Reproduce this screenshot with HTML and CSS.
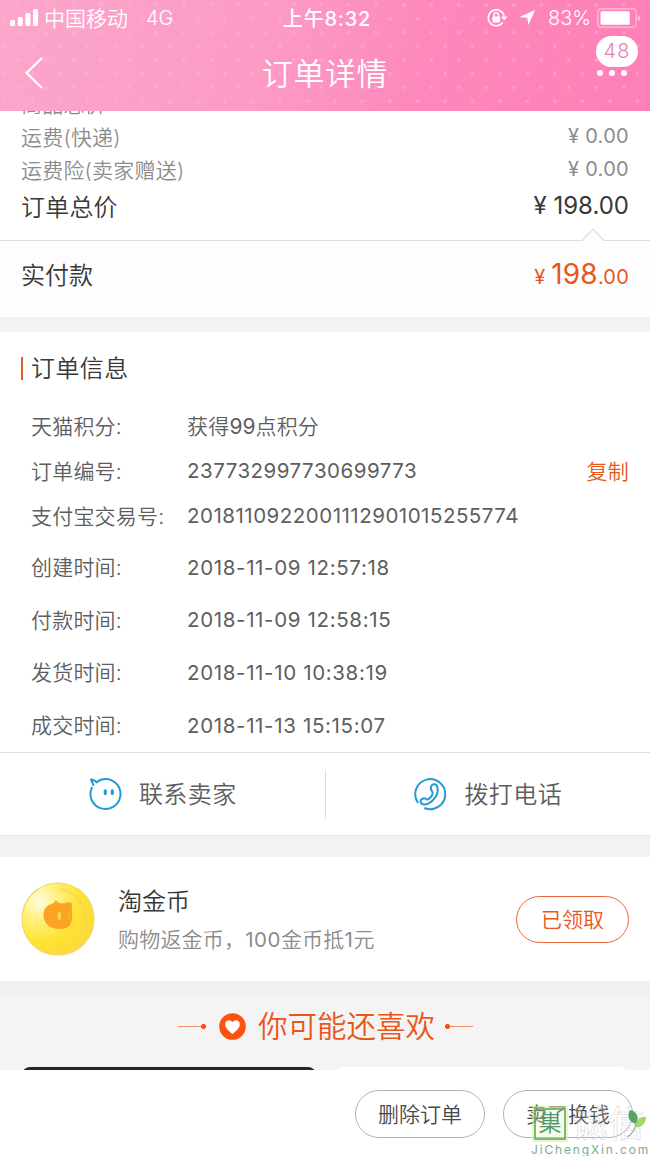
FILE: index.html
```html
<!DOCTYPE html>
<html lang="zh-CN">
<head>
    <meta charset="UTF-8">
    <meta name="viewport" content="width=device-width, initial-scale=1.0">
    <title>订单详情</title>
    <link rel="stylesheet" href="styles.css">
</head>
<body>
    <div class="page">
        <!-- Header -->
        <header class="header">
            <div class="status-bar">
                <div class="status-left">
                    <svg class="signal" width="29" height="18" viewBox="0 0 29 18" fill="#fff">
                        <rect x="0" y="11" width="5" height="6" rx="1.5"/>
                        <rect x="7.8" y="8" width="5" height="9" rx="1.5"/>
                        <rect x="15.4" y="4" width="5" height="13" rx="1.5"/>
                        <rect x="23" y="0" width="5" height="17" rx="1.5"/>
                    </svg>
                    <span class="carrier">中国移动</span>
                    <span class="network">4G</span>
                </div>
                <div class="clock">上午8:32</div>
                <div class="status-right">
                    <svg class="lock" width="21" height="20" viewBox="0 0 21 20" fill="none" stroke="#fff" stroke-width="1.5">
                        <path d="M15.8 14.5A8 8 0 1 1 17.2 8.5"/>
                        <path d="M14 8.5h6.6l-3.3 4z" fill="#fff" stroke="none"/>
                        <rect x="5.5" y="8.5" width="7.4" height="6" rx="0.8" fill="#fff" stroke="none"/>
                        <path d="M7 9V7a2.2 2.2 0 0 1 4.4 0v2"/>
                    </svg>
                    <svg class="location" width="17" height="17" viewBox="0 0 17 17" fill="#fff">
                        <path d="M16 1L9.3 16.3 8.5 8.7 0.6 8.1z"/>
                    </svg>
                    <span class="percent">83%</span>
                    <svg class="battery" width="44" height="20" viewBox="0 0 44 20">
                        <rect x="0.8" y="0.8" width="38.4" height="18.4" rx="3.5" fill="none" stroke="#fff" stroke-opacity="0.5" stroke-width="1.2"/>
                        <rect x="3.5" y="3.2" width="29.2" height="13.6" rx="1.5" fill="#fff"/>
                        <path d="M41.4 7v6c2.3-1 2.3-5 0-6z" fill="#fff" fill-opacity="0.5"/>
                    </svg>
                </div>
            </div>
            <div class="nav">
                <svg class="back" width="20" height="32" viewBox="0 0 20 32" fill="none" stroke="#fff" stroke-width="2.2">
                    <path d="M18 1L2.5 16 18 31"/>
                </svg>
                <h1>订单详情</h1>
                <div class="more"><i></i><i></i><i></i><span class="badge">48</span></div>
            </div>
        </header>

        <!-- Price summary -->
        <section class="prices">
            <div class="price-row"><span>商品总价</span></div>
            <div class="price-row"><span>运费(快递)</span><b>¥ 0.00</b></div>
            <div class="price-row"><span>运费险(卖家赠送)</span><b>¥ 0.00</b></div>
            <div class="price-row total"><span>订单总价</span><b>¥ 198.00</b></div>
        </section>
        <section class="paid">
            <svg class="notch" width="24" height="14" viewBox="0 0 24 14">
                <path d="M0.5 13L12 1.2 23.5 13V14H0.5z" fill="#fdfdfd"/>
                <path d="M0.5 13L12 1.2 23.5 13" fill="none" stroke="#dedede" stroke-width="1.2"/>
            </svg>
            <span>实付款</span>
            <div class="amount">¥ <em>198</em>.00</div>
        </section>

        <!-- Order info -->
        <section class="info">
            <h2>订单信息</h2>
            <dl>
                <div class="info-row"><dt>天猫积分:</dt><dd>获得<span class="points">99</span>点积分</dd></div>
                <div class="info-row"><dt>订单编号:</dt><dd class="num">237732997730699773</dd><a class="copy">复制</a></div>
                <div class="info-row"><dt>支付宝交易号:</dt><dd class="num">2018110922001112901015255774</dd></div>
            </dl>
            <dl class="times">
                <div class="info-row"><dt>创建时间:</dt><dd class="num">2018-11-09 12:57:18</dd></div>
                <div class="info-row"><dt>付款时间:</dt><dd class="num">2018-11-09 12:58:15</dd></div>
                <div class="info-row"><dt>发货时间:</dt><dd class="num">2018-11-10 10:38:19</dd></div>
                <div class="info-row"><dt>成交时间:</dt><dd class="num">2018-11-13 15:15:07</dd></div>
            </dl>
        </section>

        <section class="contact">
            <div class="contact-item">
                <svg width="34" height="34" viewBox="0 0 34 34" fill="none" stroke="#2499d6" stroke-width="2" stroke-linecap="round" stroke-linejoin="round">
                    <path d="M8.6 5.2C12 2.3 15 2 17.5 2A15 15 0 1 1 3.8 10.8"/>
                    <path d="M8.6 5.2C7.5 4.5 6.3 2.5 3 2.5L5.4 8"/>
                    <path d="M17.3 13.8v2.6M24.3 13.8v2.6" stroke-width="3.2"/>
                </svg>
                <span>联系卖家</span>
            </div>
            <div class="contact-item">
                <svg width="34" height="34" viewBox="0 0 34 34" fill="none" stroke="#2499d6" stroke-width="2" stroke-linecap="round" stroke-linejoin="round">
                    <path d="M4.6 25.2A15 15 0 1 1 12 31.2"/>
                    <path d="M18.2 9.2c1.5-2.8 5.2-2.5 6.2 1 1.5 6.3-3 13.5-9.3 16.5-3.5 1.7-7.4.6-7.6-2-.2-2.7 3.7-4.3 5.6-2.7 1.3 1.2 2.7.2 4-1.2 1.7-1.9 2.9-4.2 2.4-5.4-.5-1.3-2.7-3.5-1.3-6.2z"/>
                </svg>
                <span>拨打电话</span>
            </div>
        </section>

        <!-- Coins -->
        <section class="coins">
            <svg class="coin" width="74" height="74" viewBox="0 0 74 74">
                <defs>
                    <radialGradient id="gold" cx="0.24" cy="0.25" r="0.8">
                        <stop offset="0" stop-color="#fffce0"/>
                        <stop offset="0.35" stop-color="#fff07a"/>
                        <stop offset="0.7" stop-color="#fee334"/>
                        <stop offset="1" stop-color="#fcdb3a"/>
                    </radialGradient>
                </defs>
                <circle cx="37" cy="37" r="36" fill="url(#gold)" stroke="#eed869" stroke-width="1.2"/>
                <path d="M38 7A30 30 0 0 1 64 42" fill="none" stroke="#f3d455" stroke-width="1.2"/>
                <path d="M34.5 18c1.3 1.5 3 3 6 3.5 3 0 6-1.5 8.800-1.3 1.8.2 1.5 3 1.6 6 .5 3.5.4 7 .1 11-.5 6.500-5 9.800-13 9.800-8.500 0-15-5-15.500-13.500-.4-7 4-10.500 9.200-12 1.900-.5 2.400-1.500 2.800-3.500z" fill="#fba322"/>
                <ellipse cx="38.3" cy="34" rx="1.8" ry="4" fill="#ffd75a"/>
                <ellipse cx="48.3" cy="34" rx="1.5" ry="4" fill="#ffb030"/>
            </svg>
            <div class="coin-text">
                <h3>淘金币</h3>
                <p>购物返金币，<span>100</span>金币抵<span>1</span>元</p>
            </div>
            <button class="claimed">已领取</button>
        </section>

        <!-- Recommendations -->
        <section class="recommend">
            <div class="recommend-title">
                <i class="line"></i>
                <svg width="27" height="27" viewBox="0 0 27 27">
                    <circle cx="13.5" cy="13.5" r="13.3" fill="#fb5310"/>
                    <path d="M13.5 21C9 17.3 6.2 14.5 6.2 11.2 6.2 6.8 11.5 5.7 13.5 9.3 15.5 5.7 20.8 6.8 20.8 11.2 20.8 14.5 18 17.3 13.5 21z" fill="#fff"/>
                </svg>
                <span>你可能还喜欢</span>
                <i class="line right"></i>
            </div>
            <div class="cards">
                <div class="card dark"></div>
                <div class="card"></div>
            </div>
        </section>

        <!-- Bottom actions -->
        <footer class="actions">
            <button>删除订单</button>
            <button>卖了换钱</button>
            <div class="watermark">
                <div class="mark-top">
                    <span class="mark-box">集</span>
                    <span class="mark-name">诚信</span>
                    <svg class="leaf" width="20" height="28" viewBox="0 0 20 28">
                        <path d="M9 14C1 12 0 5 3 0c6 1 9 6 7 12z" fill="#58a368"/>
                        <path d="M9 15C10 9 14 6 19 7c0 6-4 11-10 10z" fill="#a5d967"/>
                        <path d="M9 14c-1 4-2 9-9 13" fill="none" stroke="#8caaa8" stroke-width="1.2"/>
                    </svg>
                </div>
                <div class="mark-url">JiChengXin.com</div>
            </div>
        </footer>
    </div>
</body>
</html>
```
FILE: styles.css
```css
* {
    box-sizing: border-box;
}
body {
    margin: 0;
    background-color: #f2f2f2;
    font-family: Inter, "Noto Sans CJK SC", sans-serif;
    font-weight: 350;
    color: #383838;
}
h1, h2, h3, p, dl, dd {
    margin: 0;
    font-weight: inherit;
}
b, em, i {
    font-style: normal;
    font-weight: inherit;
}
svg {
    display: block;
    flex: none;
}
.page {
    width: 650px;
    height: 1156px;
    overflow: hidden;
    display: flex;
    flex-direction: column;
}
.page > * {
    flex: none;
}

/* header */
.header {
    position: relative;
    z-index: 1;
    height: 111px;
    color: #fff;
    background-image:
        radial-gradient(circle, rgba(255, 190, 220, 0.4) 1.2px, transparent 2.5px),
        radial-gradient(circle, rgba(255, 190, 220, 0.4) 1.2px, transparent 2.5px),
        linear-gradient(100deg, #fba6cb 0%, #fc9bc5 40%, #fd88bb 65%, #fd80b6 100%);
    background-size: 27.5px 27.5px, 27.5px 27.5px, 100% 100%;
    background-position: 18.7px 5px, 5px 18.7px, 0 0;
}
.status-bar {
    display: grid;
    grid-template-columns: 1fr auto 1fr;
    align-items: center;
    height: 36px;
    padding: 0 9px 1px 10px;
    font-size: 20px;
}
.status-left, .status-right {
    display: flex;
    align-items: center;
}
.status-right {
    justify-content: flex-end;
}
.carrier {
    margin-left: 5px;
    padding-bottom: 2px;
    font-size: 21px;
}
.network {
    margin-left: 18px;
}
.clock {
    padding-left: 3px;
    font-weight: 500;
    letter-spacing: 0.8px;
}
.location {
    margin: 0 12px 0 11px;
}
.battery {
    margin-left: 6px;
}
.nav {
    display: flex;
    align-items: center;
    justify-content: space-between;
    height: 74px;
    padding: 0 23px 0 24px;
}
.nav h1 {
    font-size: 31px;
    letter-spacing: 0.6px;
    padding: 0 0 4px 9px;
}
.more {
    position: relative;
    display: flex;
    gap: 6px;
}
.more i {
    width: 6px;
    height: 6px;
    border-radius: 50%;
    background-color: #fff;
}
.badge {
    position: absolute;
    right: -11px;
    bottom: 9px;
    width: 42px;
    height: 31px;
    border-radius: 16px;
    background-color: #fff;
    color: #e87fae;
    font-size: 20px;
    line-height: 31px;
    text-align: center;
    letter-spacing: 1px;
}

/* prices */
.prices {
    height: 153px;
    margin-top: -24px;
    padding: 0 21px;
    background-color: #fff;
}
.price-row {
    display: flex;
    justify-content: space-between;
    align-items: center;
    height: 33px;
    padding-bottom: 2px;
    font-size: 21px;
    letter-spacing: 0.2px;
    color: #8c8c8c;
}
.price-row b {
    font-size: 20px;
    font-weight: 400;
    letter-spacing: 0.3px;
}
.total {
    height: 39px;
    padding-bottom: 1px;
    font-size: 24px;
    color: #383838;
}
.total b {
    font-size: 24px;
    letter-spacing: 0;
}
.paid {
    position: relative;
    display: flex;
    justify-content: space-between;
    height: 77px;
    padding: 18px 21px 0;
    border-top: 1px solid #dedede;
    background-color: #fdfdfd;
    font-size: 24px;
    line-height: 34px;
}
.notch {
    position: absolute;
    top: -13px;
    right: 45px;
}
.amount {
    margin-top: -2px;
    color: #e8561c;
    font-size: 20px;
    font-weight: 400;
    letter-spacing: 0.2px;
}
.amount em {
    font-size: 28px;
}

/* order info */
.info {
    height: 420px;
    margin-top: 15px;
    padding-top: 20px;
    background-color: #fff;
}
.info h2 {
    margin-left: 21px;
    padding-left: 10px;
    height: 34px;
    font-size: 24px;
    line-height: 34px;
    letter-spacing: 0.4px;
    background: linear-gradient(#e0602a, #e0602a) 0 5px / 2px 23px no-repeat;
}
.info dl {
    padding: 0 21px 0 31px;
    margin-top: 16px;
}
.info .times {
    margin-top: 3px;
}
.info-row {
    display: flex;
    align-items: center;
    height: 45px;
    font-size: 21px;
    letter-spacing: 0.2px;
    color: #5e5e5e;
}
.times .info-row {
    height: 52.6px;
}
.info-row dt {
    width: 156px;
}
.num {
    padding-top: 2px;
    font-size: 20.5px;
    font-weight: 400;
    letter-spacing: 0.5px;
}
.times .num {
    letter-spacing: 0.65px;
}
.points {
    font-weight: 400;
    letter-spacing: 0;
}
.copy {
    margin-left: auto;
    color: #e8561c;
}

/* contact */
.contact {
    display: flex;
    align-items: center;
    height: 84px;
    background-color: #fff;
    border-top: 1px solid #dedede;
    border-bottom: 1px solid #e4e4e4;
}
.contact-item {
    flex: 1;
    display: flex;
    align-items: center;
    justify-content: center;
    gap: 17px;
    height: 49px;
    font-size: 24px;
    letter-spacing: 0.4px;
    color: #5e5e5e;
}
.contact-item span {
    padding-bottom: 3px;
}
.contact-item + .contact-item {
    border-left: 1px solid #dedede;
}

/* coins */
.coins {
    display: flex;
    align-items: center;
    height: 124px;
    margin-top: 21px;
    padding: 0 21px;
    background-color: #fff;
}
.coin-text {
    margin-left: 23px;
    padding-top: 3px;
}
.coin-text h3 {
    font-size: 24px;
    line-height: 36px;
}
.coin-text p {
    margin-top: 2px;
    font-size: 21px;
    line-height: 36px;
    letter-spacing: 0.2px;
    color: #8c8c8c;
}
.coin-text p span {
    font-size: 20.5px;
    font-weight: 400;
    letter-spacing: 0.5px;
}
button {
    font: inherit;
    font-size: 21px;
    padding: 0 0 3px;
    background-color: #fff;
}
.claimed {
    width: 113px;
    height: 47px;
    margin-left: auto;
    border: 1px solid #e8663a;
    border-radius: 24px;
    color: #e8561c;
}

/* recommendations */
.recommend {
    height: 89px;
    background: linear-gradient(#f0f0f0 14px, #f4f4f4 15px);
    overflow: hidden;
}
.recommend-title {
    display: flex;
    align-items: center;
    justify-content: center;
    height: 85px;
    padding: 6px 0 0 1px;
    font-size: 29.5px;
    color: #e8561c;
}
.recommend-title span {
    margin: 0 10px 0 12px;
    padding-bottom: 6px;
}
.line {
    width: 28px;
    height: 5px;
    background:
        radial-gradient(circle at 25.5px 2.5px, #e8561c 2.2px, transparent 2.7px),
        linear-gradient(#ee9270, #ee9270) 0 2px / 100% 1px no-repeat;
}
.line + svg {
    margin-left: 13px;
}
.line.right {
    transform: scaleX(-1);
}
.cards {
    display: grid;
    grid-template-columns: 294px 294px;
    gap: 18px;
    margin-top: 1px;
    padding-left: 22px;
}
.card {
    height: 20px;
    border-radius: 8px;
    background-color: #fff;
}
.dark {
    background-color: #25262b;
}

/* bottom bar */
.actions {
    position: relative;
    z-index: 1;
    display: flex;
    justify-content: flex-end;
    gap: 18px;
    height: 86px;
    padding: 20px 17px 0 0;
    background-color: #fff;
}
.actions button {
    width: 130px;
    height: 48px;
    border: 1px solid #b4b4b4;
    border-radius: 24px;
    color: #484848;
}
.watermark {
    position: absolute;
    left: 534px;
    top: 38px;
    width: 116px;
}
.mark-top {
    position: relative;
    display: flex;
    height: 35px;
}
.mark-box {
    width: 32px;
    height: 32px;
    border: 2px solid rgba(95, 165, 95, 0.8);
    outline: 2px solid rgba(215, 243, 150, 0.6);
    background-color: rgba(225, 245, 180, 0.3);
    color: #4f9a72;
    font-size: 23px;
    line-height: 26px;
    text-align: center;
}
.mark-name {
    margin-left: 6px;
    font-size: 36px;
    line-height: 32px;
    color: rgba(255, 255, 255, 0.2);
    -webkit-text-stroke: 0.6px rgba(180, 180, 180, 0.6);
    font-weight: 500;
    white-space: nowrap;
}
.leaf {
    position: absolute;
    right: 3px;
    top: 2px;
}
.mark-url {
    margin-left: -3px;
    font-size: 12px;
    line-height: 14px;
    font-weight: 400;
    letter-spacing: 1.85px;
    color: #79ad8b;
}
```
